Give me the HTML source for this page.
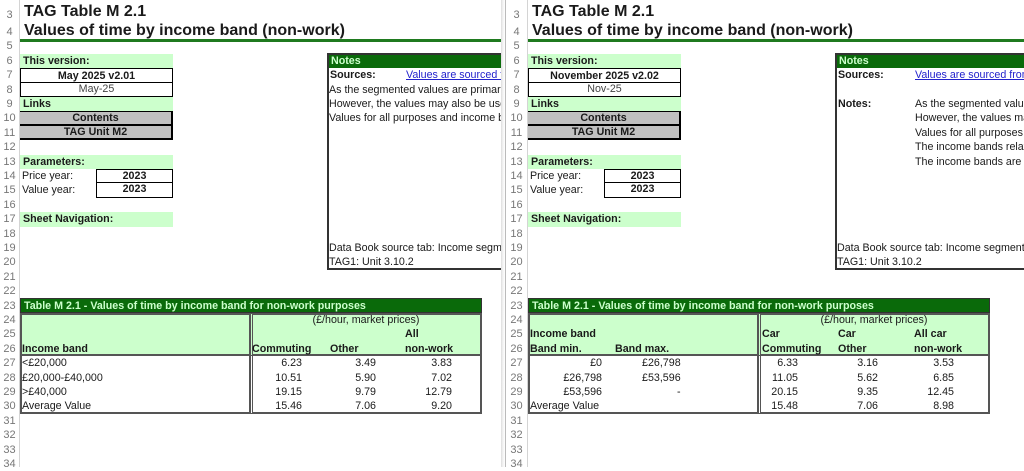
<!DOCTYPE html>
<html><head><meta charset="utf-8"><style>
*{margin:0;padding:0;box-sizing:border-box}
body{width:1024px;height:467px;overflow:hidden;background:#fff;font-family:"Liberation Sans",Arial,sans-serif;font-size:10.7px;color:#1a1a1a;position:relative}
.a{position:absolute;white-space:nowrap;line-height:14.4px}
.pane{position:absolute;top:0;height:467px;overflow:hidden}
.rh{position:absolute;top:0;height:467px;background:#fff;border-right:1px solid #d4d4d4}
.rn{position:absolute;width:100%;text-align:center;color:#777;font-size:11px;line-height:14.4px}
.lg{background:#ccffcc}
.dg{background:#0a6a0a;color:#ccffcc;font-weight:bold}
.b{font-weight:bold}
.c{text-align:center}
.r{text-align:right}
.t{font-size:16px;font-weight:bold;line-height:20px}
.lnk{color:#2222cc;text-decoration:underline}
</style></head><body>

<!-- LEFT PANE -->
<div class="rh" style="left:0;width:20px">
<div class="rn" style="top:5px;height:18px;line-height:20px">3</div>
<div class="rn" style="top:25px">4</div>
<div class="rn" style="top:39.4px">5</div><div class="rn" style="top:53.8px">6</div><div class="rn" style="top:68.2px">7</div><div class="rn" style="top:82.6px">8</div><div class="rn" style="top:97px">9</div><div class="rn" style="top:111.4px">10</div><div class="rn" style="top:125.8px">11</div><div class="rn" style="top:140.2px">12</div><div class="rn" style="top:154.6px">13</div><div class="rn" style="top:169px">14</div><div class="rn" style="top:183.4px">15</div><div class="rn" style="top:197.8px">16</div><div class="rn" style="top:212.2px">17</div><div class="rn" style="top:226.6px">18</div><div class="rn" style="top:241px">19</div><div class="rn" style="top:255.4px">20</div><div class="rn" style="top:269.8px">21</div><div class="rn" style="top:284.2px">22</div><div class="rn" style="top:298.6px">23</div><div class="rn" style="top:313px">24</div><div class="rn" style="top:327.4px">25</div><div class="rn" style="top:341.8px">26</div><div class="rn" style="top:356.2px">27</div><div class="rn" style="top:370.6px">28</div><div class="rn" style="top:385px">29</div><div class="rn" style="top:399.4px">30</div><div class="rn" style="top:413.8px">31</div><div class="rn" style="top:428.2px">32</div><div class="rn" style="top:442.6px">33</div><div class="rn" style="top:457px">34</div>
</div>
<div class="pane" style="left:20px;width:481px">
<div class="a t" style="left:4px;top:2px">TAG Table M 2.1</div>
<div class="a t" style="left:4px;top:21px">Values of time by income band (non-work)</div>
<div class="a" style="left:0;top:39px;width:481px;height:3px;background:#1f7a1f"></div>
<div class="a lg b" style="left:0;top:53.8px;width:153px;height:14.4px;padding-left:3px">This version:</div>
<div class="a b c" style="left:0;top:68.2px;width:153px;height:14.4px;border:1px solid #000">May 2025 v2.01</div>
<div class="a c" style="left:0;top:82.6px;width:153px;height:14.4px;border:1px solid #000;border-top:0;color:#444;line-height:13px">May-25</div>
<div class="a lg b" style="left:0;top:97px;width:153px;height:14.4px;padding-left:3px">Links</div>
<div class="a b c" style="left:0;top:111.4px;width:153px;height:14.4px;background:#c0c0c0;border-right:2px solid #000;border-bottom:2px solid #000;border-top:1px solid #000;line-height:12px">Contents</div>
<div class="a b c" style="left:0;top:125.8px;width:153px;height:14.4px;background:#c0c0c0;border-right:2px solid #000;border-bottom:2px solid #000;line-height:13px">TAG Unit M2</div>
<div class="a lg b" style="left:0;top:154.6px;width:153px;height:14.4px;padding-left:3px">Parameters:</div>
<div class="a" style="left:2px;top:169px">Price year:</div>
<div class="a" style="left:2px;top:183.4px">Value year:</div>
<div class="a b c" style="left:76px;top:169px;width:77px;height:14.4px;border:1px solid #000;line-height:12px">2023</div>
<div class="a b c" style="left:76px;top:183.4px;width:77px;height:14.4px;border:1px solid #000;border-top:0;line-height:13px">2023</div>
<div class="a lg b" style="left:0;top:212.2px;width:153px;height:14.4px;padding-left:3px">Sheet Navigation:</div>
<div class="a" style="left:307px;top:53px;width:200px;height:217px;border:2px solid #333"></div>
<div class="a dg" style="left:309px;top:55px;width:200px;height:13px;line-height:13px;padding-left:2px">Notes</div>
<div class="a b" style="left:310px;top:68.2px">Sources:</div>
<div class="a lnk" style="left:386px;top:68.2px">Values are sourced from</div>
<div class="a" style="left:309px;top:82.6px">As the segmented values are primarily</div>
<div class="a" style="left:309px;top:97px">However, the values may also be used</div>
<div class="a" style="left:309px;top:111.4px">Values for all purposes and income bands</div>
<div class="a" style="left:309px;top:241px">Data Book source tab: Income segmented</div>
<div class="a" style="left:309px;top:255.4px">TAG1: Unit 3.10.2</div>
<!-- table -->
<div class="a dg" style="left:0;top:298px;width:462px;height:15px;padding-left:3px;border:1px solid #333;line-height:14px">Table M 2.1 - Values of time by income band for non-work purposes</div>
<div class="a lg" style="left:0;top:313px;width:230px;height:43.2px;border:2px solid #555;border-right-width:1px"></div>
<div class="a lg" style="left:230px;top:313px;width:232px;height:43.2px;border:2px solid #555;border-left:3px double #555"></div>
<div class="a" style="left:0;top:356.2px;width:230px;height:58px;border:2px solid #555;border-top:0;border-right-width:1px"></div>
<div class="a" style="left:230px;top:356.2px;width:232px;height:58px;border:2px solid #555;border-top:0;border-left:3px double #555"></div>
<div class="a c" style="left:230px;top:313px;width:232px">(£/hour, market prices)</div>
<div class="a b" style="left:385px;top:327.4px">All</div>
<div class="a b" style="left:2px;top:341.8px">Income band</div>
<div class="a b" style="left:232px;top:341.8px">Commuting</div>
<div class="a b" style="left:310px;top:341.8px">Other</div>
<div class="a b" style="left:385px;top:341.8px">non-work</div>
<div class="a" style="left:2px;top:356.2px">&lt;£20,000</div>
<div class="a" style="left:2px;top:370.6px">£20,000-£40,000</div>
<div class="a" style="left:2px;top:385px">&gt;£40,000</div>
<div class="a" style="left:2px;top:399.4px">Average Value</div>
<div class="a r" style="left:230px;top:356.2px;width:52px">6.23<br>10.51<br>19.15<br>15.46</div>
<div class="a r" style="left:300px;top:356.2px;width:56px">3.49<br>5.90<br>9.79<br>7.06</div>
<div class="a r" style="left:380px;top:356.2px;width:52px">3.83<br>7.02<br>12.79<br>9.20</div>
</div>
<div class="a" style="left:501px;top:0;width:4px;height:467px;background:linear-gradient(90deg,#ddd,#f4f4f4,#fff)"></div>

<!-- RIGHT PANE -->
<div class="rh" style="left:505px;width:23px;border-left:1px solid #bbb">
<div class="rn" style="top:5px;height:18px;line-height:20px">3</div>
<div class="rn" style="top:25px">4</div>
<div class="rn" style="top:39.4px">5</div><div class="rn" style="top:53.8px">6</div><div class="rn" style="top:68.2px">7</div><div class="rn" style="top:82.6px">8</div><div class="rn" style="top:97px">9</div><div class="rn" style="top:111.4px">10</div><div class="rn" style="top:125.8px">11</div><div class="rn" style="top:140.2px">12</div><div class="rn" style="top:154.6px">13</div><div class="rn" style="top:169px">14</div><div class="rn" style="top:183.4px">15</div><div class="rn" style="top:197.8px">16</div><div class="rn" style="top:212.2px">17</div><div class="rn" style="top:226.6px">18</div><div class="rn" style="top:241px">19</div><div class="rn" style="top:255.4px">20</div><div class="rn" style="top:269.8px">21</div><div class="rn" style="top:284.2px">22</div><div class="rn" style="top:298.6px">23</div><div class="rn" style="top:313px">24</div><div class="rn" style="top:327.4px">25</div><div class="rn" style="top:341.8px">26</div><div class="rn" style="top:356.2px">27</div><div class="rn" style="top:370.6px">28</div><div class="rn" style="top:385px">29</div><div class="rn" style="top:399.4px">30</div><div class="rn" style="top:413.8px">31</div><div class="rn" style="top:428.2px">32</div><div class="rn" style="top:442.6px">33</div><div class="rn" style="top:457px">34</div>
</div>
<div class="pane" style="left:528px;width:496px">
<div class="a t" style="left:4px;top:2px">TAG Table M 2.1</div>
<div class="a t" style="left:4px;top:21px">Values of time by income band (non-work)</div>
<div class="a" style="left:0;top:39px;width:496px;height:3px;background:#1f7a1f"></div>
<div class="a lg b" style="left:0;top:53.8px;width:153px;height:14.4px;padding-left:3px">This version:</div>
<div class="a b c" style="left:0;top:68.2px;width:153px;height:14.4px;border:1px solid #000">November 2025 v2.02</div>
<div class="a c" style="left:0;top:82.6px;width:153px;height:14.4px;border:1px solid #000;border-top:0;color:#444;line-height:13px">Nov-25</div>
<div class="a lg b" style="left:0;top:97px;width:153px;height:14.4px;padding-left:3px">Links</div>
<div class="a b c" style="left:0;top:111.4px;width:153px;height:14.4px;background:#c0c0c0;border-right:2px solid #000;border-bottom:2px solid #000;border-top:1px solid #000;line-height:12px">Contents</div>
<div class="a b c" style="left:0;top:125.8px;width:153px;height:14.4px;background:#c0c0c0;border-right:2px solid #000;border-bottom:2px solid #000;line-height:13px">TAG Unit M2</div>
<div class="a lg b" style="left:0;top:154.6px;width:153px;height:14.4px;padding-left:3px">Parameters:</div>
<div class="a" style="left:2px;top:169px">Price year:</div>
<div class="a" style="left:2px;top:183.4px">Value year:</div>
<div class="a b c" style="left:76px;top:169px;width:77px;height:14.4px;border:1px solid #000;line-height:12px">2023</div>
<div class="a b c" style="left:76px;top:183.4px;width:77px;height:14.4px;border:1px solid #000;border-top:0;line-height:13px">2023</div>
<div class="a lg b" style="left:0;top:212.2px;width:153px;height:14.4px;padding-left:3px">Sheet Navigation:</div>
<div class="a" style="left:307px;top:53px;width:200px;height:217px;border:2px solid #333"></div>
<div class="a dg" style="left:309px;top:55px;width:200px;height:13px;line-height:13px;padding-left:2px">Notes</div>
<div class="a b" style="left:310px;top:68.2px">Sources:</div>
<div class="a lnk" style="left:387px;top:68.2px">Values are sourced from</div>
<div class="a b" style="left:310px;top:97px">Notes:</div>
<div class="a" style="left:387px;top:97px">As the segmented values</div>
<div class="a" style="left:387px;top:111.4px">However, the values may</div>
<div class="a" style="left:387px;top:125.8px">Values for all purposes</div>
<div class="a" style="left:387px;top:140.2px">The income bands relate</div>
<div class="a" style="left:387px;top:154.6px">The income bands are g</div>
<div class="a" style="left:309px;top:241px">Data Book source tab: Income segmented</div>
<div class="a" style="left:309px;top:255.4px">TAG1: Unit 3.10.2</div>
<!-- table -->
<div class="a dg" style="left:0;top:298px;width:462px;height:15px;padding-left:3px;border:1px solid #333;line-height:14px">Table M 2.1 - Values of time by income band for non-work purposes</div>
<div class="a lg" style="left:0;top:313px;width:230px;height:43.2px;border:2px solid #555;border-right-width:1px"></div>
<div class="a lg" style="left:230px;top:313px;width:232px;height:43.2px;border:2px solid #555;border-left:3px double #555"></div>
<div class="a" style="left:0;top:356.2px;width:230px;height:58px;border:2px solid #555;border-top:0;border-right-width:1px"></div>
<div class="a" style="left:230px;top:356.2px;width:232px;height:58px;border:2px solid #555;border-top:0;border-left:3px double #555"></div>
<div class="a c" style="left:230px;top:313px;width:232px">(£/hour, market prices)</div>
<div class="a b" style="left:2px;top:327.4px">Income band</div>
<div class="a b" style="left:2px;top:341.8px">Band min.</div>
<div class="a b" style="left:87px;top:341.8px">Band max.</div>
<div class="a b" style="left:234px;top:327.4px">Car</div>
<div class="a b" style="left:310px;top:327.4px">Car</div>
<div class="a b" style="left:386px;top:327.4px">All car</div>
<div class="a b" style="left:234px;top:341.8px">Commuting</div>
<div class="a b" style="left:310px;top:341.8px">Other</div>
<div class="a b" style="left:386px;top:341.8px">non-work</div>
<div class="a r" style="left:0;top:356.2px;width:74px">£0<br>£26,798<br>£53,596</div>
<div class="a" style="left:114px;top:356.2px">£26,798<br>£53,596</div>
<div class="a" style="left:149px;top:385px">-</div>
<div class="a" style="left:2px;top:399.4px">Average Value</div>
<div class="a r" style="left:230px;top:356.2px;width:40px">6.33<br>11.05<br>20.15<br>15.48</div>
<div class="a r" style="left:300px;top:356.2px;width:50px">3.16<br>5.62<br>9.35<br>7.06</div>
<div class="a r" style="left:380px;top:356.2px;width:46px">3.53<br>6.85<br>12.45<br>8.98</div>
</div>
</body></html>
